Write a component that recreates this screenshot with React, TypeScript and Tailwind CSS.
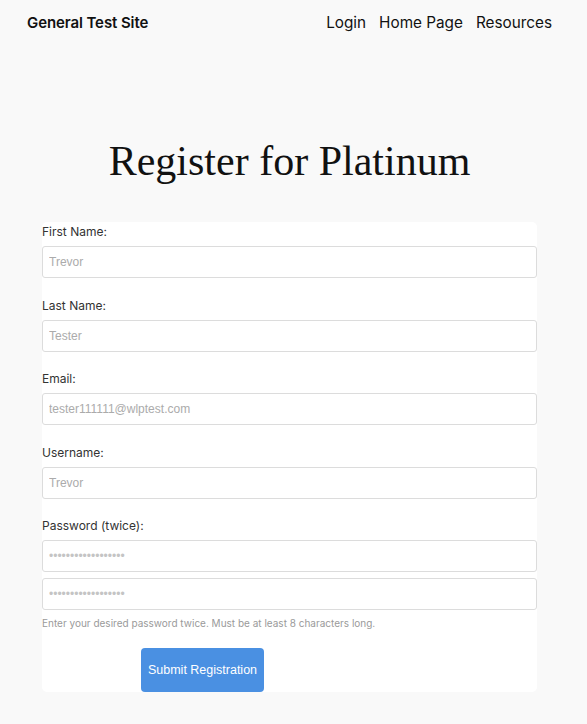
import React from 'react';

const fields = [
  { label: 'First Name:', placeholder: 'Trevor', type: 'text' },
  { label: 'Last Name:', placeholder: 'Tester', type: 'text' },
  { label: 'Email:', placeholder: 'tester111111@wlptest.com', type: 'email' },
  { label: 'Username:', placeholder: 'Trevor', type: 'text' },
];

const inputClass =
  "block w-full h-[32px] rounded-[3px] border border-[#dcdcdc] bg-white px-[6px] text-[12px] text-[#333] placeholder:text-[#ababab] outline-none font-['Liberation_Sans',Arial,sans-serif]";

export default function App() {
  return (
    <div className="min-h-[724px] bg-[#f9f9f9] text-[#111] font-['Inter','Noto_Sans',sans-serif]">
      {/* Header */}
      <header className="flex items-center justify-between pl-[27px] pr-[35px] pt-[10px]">
        <a className="text-[15px] font-semibold leading-[22px] tracking-[-0.1px]">General Test Site</a>
        <nav className="flex gap-[13px] text-[15.3px] leading-[24px] pt-[1px]">
          <a>Login</a>
          <a>Home Page</a>
          <a>Resources</a>
        </nav>
      </header>

      <main className="w-[495px] ml-[42px]">
        <h1 className="mt-[101px] text-center text-[42px] leading-[50px] font-['Liberation_Serif','Times_New_Roman',serif] font-normal text-[#111]">
          Register for Platinum
        </h1>

        <form className="mt-[36px] rounded-[5px] bg-white">
          {fields.map((f, i) => (
            <div key={i} className="mb-[17.5px]">
              <label className="block text-[12px] leading-[20px] text-[#333] mb-[4px]">{f.label}</label>
              <input type={f.type} placeholder={f.placeholder} className={inputClass} />
            </div>
          ))}

          <div>
            <label className="block text-[12px] leading-[20px] text-[#333] mb-[4px]">Password (twice):</label>
            <input type="password" placeholder="••••••••••••••••••" className={inputClass + ' placeholder:text-[#c4c4c4]'} />
            <input type="password" placeholder="••••••••••••••••••" className={inputClass + ' mt-[6px] placeholder:text-[#c4c4c4]'} />
            <p className="mt-[4px] text-[10px] leading-[18px] text-[#9a9a9a]">
              Enter your desired password twice. Must be at least 8 characters long.
            </p>
          </div>

          <div className="pt-[16px] pl-[99px]">
            <button
              type="button"
              className="h-[44px] w-[123px] rounded-[4px] bg-[#4a90e2] text-[12.5px] text-white font-['Liberation_Sans',Arial,sans-serif]"
            >
              Submit Registration
            </button>
          </div>
        </form>
      </main>
    </div>
  );
}
